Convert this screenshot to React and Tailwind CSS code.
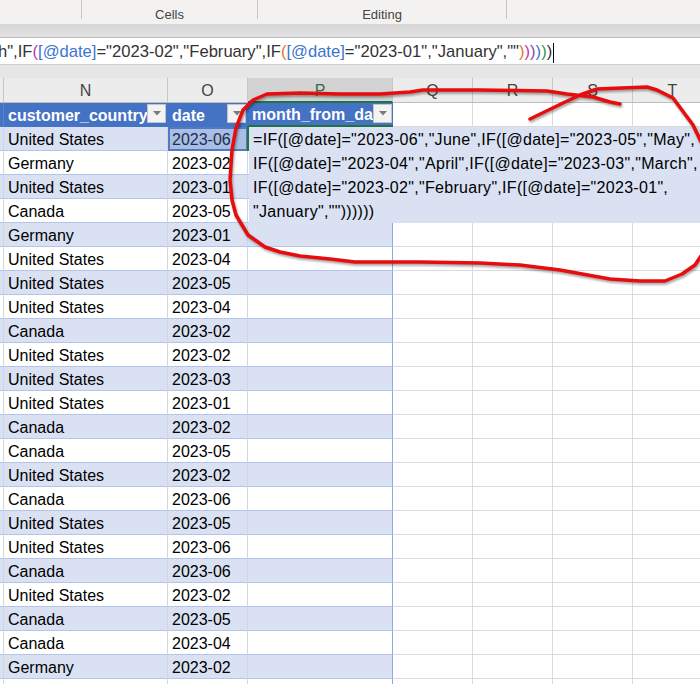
import React from 'react'

const rows = [
  ['United States', '2023-06'],
  ['Germany', '2023-02'],
  ['United States', '2023-01'],
  ['Canada', '2023-05'],
  ['Germany', '2023-01'],
  ['United States', '2023-04'],
  ['United States', '2023-05'],
  ['United States', '2023-04'],
  ['Canada', '2023-02'],
  ['United States', '2023-02'],
  ['United States', '2023-03'],
  ['United States', '2023-01'],
  ['Canada', '2023-02'],
  ['Canada', '2023-05'],
  ['United States', '2023-02'],
  ['Canada', '2023-06'],
  ['United States', '2023-05'],
  ['United States', '2023-06'],
  ['Canada', '2023-06'],
  ['United States', '2023-02'],
  ['Canada', '2023-05'],
  ['Canada', '2023-04'],
  ['Germany', '2023-02'],
  ['', ''],
]

const font = { fontFamily: '"Liberation Sans", Arial, sans-serif' }

function FilterButton() {
  return (
    <div className="absolute right-[1px] top-[1px] flex h-[19px] w-[19px] items-center justify-center border border-[#c4c4c4] bg-[#f3f3f3]">
      <svg width="8" height="5" viewBox="0 0 8 5">
        <path d="M0 0 L8 0 L4 4.5 Z" fill="#7b7b7b" />
      </svg>
    </div>
  )
}

function EmptyCells() {
  return (
    <>
      <div className="h-full w-[80px] shrink-0 border-r border-b border-[#dadada] bg-white" />
      <div className="h-full w-[80px] shrink-0 border-r border-b border-[#dadada] bg-white" />
      <div className="h-full w-[80px] shrink-0 border-r border-b border-[#dadada] bg-white" />
      <div className="h-full w-[80px] shrink-0 border-r border-b border-[#dadada] bg-white" />
    </>
  )
}

function DataRow({ country, date, band, selected }) {
  const bg = band ? 'bg-[#d9e1f2]' : 'bg-white'
  return (
    <div className="flex h-[24px] shrink-0">
      <div className={`h-full w-[4px] shrink-0 border-r border-b border-r-[#cfd6e4] border-b-[#b4c6e7] ${bg}`} />
      <div className={`h-full w-[164px] shrink-0 overflow-hidden whitespace-nowrap border-r border-b border-r-[#cfd6e4] border-b-[#b4c6e7] pl-[4px] leading-[25px] ${bg}`}>
        {country}
      </div>
      {selected ? (
        <div className="h-full w-[80px] shrink-0 overflow-hidden whitespace-nowrap bg-[#a9bee4] pl-[4px] leading-[25px] text-[#1f2d4d] shadow-[inset_0_0_0_2px_#5478c2]">
          {date}
        </div>
      ) : (
        <div className={`h-full w-[80px] shrink-0 overflow-hidden whitespace-nowrap border-r border-b border-r-[#cfd6e4] border-b-[#b4c6e7] pl-[4px] leading-[25px] ${bg}`}>
          {date}
        </div>
      )}
      <div className={`h-full w-[145px] shrink-0 border-r border-b border-r-[#8eaadb] border-b-[#b4c6e7] ${bg}`} />
      <EmptyCells />
    </div>
  )
}

function ColLetter({ w, children, active }) {
  return (
    <div
      className={`flex h-full shrink-0 items-center justify-center border-r border-[#c8c8c8] pt-[2px] ${w} ${
        active ? 'border-b-2 border-b-[#217346] bg-[#d3d3d3] text-[#2f6b48]' : 'border-b border-b-[#bdbdbd] text-[#444]'
      }`}
    >
      {children}
    </div>
  )
}

const Blue = ({ children }) => <span className="text-[#3b73d1]">{children}</span>

export default function App() {
  return (
    <div className="relative h-[684px] w-[700px] overflow-hidden bg-white text-[16px] text-black" style={font}>
      {/* ribbon bottom */}
      <div className="flex h-[24px] bg-[#f3f2f1] text-[13px] text-[#444]">
        <div className="h-[19px] w-[82px] shrink-0 border-r border-[#c8c6c4]" />
        <div className="h-[19px] w-[176px] shrink-0 border-r border-[#c8c6c4] text-center leading-[29px]">Cells</div>
        <div className="h-[19px] w-[249px] shrink-0 border-r border-[#c8c6c4] text-center leading-[29px]">Editing</div>
      </div>
      <div className="h-[14px] border-b border-[#bdbdbd] bg-gradient-to-b from-[#d5d5d5] to-[#e3e3e3]" />

      {/* formula bar */}
      <div className="flex h-[27px] items-center overflow-hidden whitespace-pre border-b border-[#d0d0d0] bg-white pt-[3px] text-[16.6px] text-[#333]">
        <span className="ml-[-2px]">
          h",IF<span className="text-[#c0379e]">(</span>
          <Blue>[@date]</Blue>="2023-02","February",IF<span className="text-[#e8751a]">(</span>
          <Blue>[@date]</Blue>="2023-01","January",""
          <span className="text-[#e8751a]">)</span>
          <span className="text-[#c0379e]">)</span>
          <span className="text-[#8e44ad]">)</span>
          <span className="text-[#3b73d1]">)</span>
          <span className="text-[#2e9b4e]">)</span>
          <span>)</span>
        </span>
        <span className="ml-[1px] h-[20px] w-[1px] bg-black" />
      </div>
      <div className="h-[13px] bg-[#e6e6e6]" />

      {/* column letters */}
      <div className="flex h-[25px] bg-[#ececec] text-[16px]">
        <ColLetter w="w-[4px]" />
        <ColLetter w="w-[164px]">N</ColLetter>
        <ColLetter w="w-[80px]">O</ColLetter>
        <ColLetter w="w-[145px]" active>P</ColLetter>
        <ColLetter w="w-[80px]">Q</ColLetter>
        <ColLetter w="w-[80px]">R</ColLetter>
        <ColLetter w="w-[80px]">S</ColLetter>
        <ColLetter w="w-[80px]">T</ColLetter>
      </div>

      {/* table header */}
      <div className="flex h-[24px] font-bold text-white">
        <div className="h-full w-[4px] shrink-0 border-r border-[#5b82c9] bg-[#4472c4]" />
        <div className="relative h-full w-[164px] shrink-0 overflow-hidden whitespace-nowrap border-r border-[#4472c4] bg-[#4472c4] pl-[4px] leading-[25px]">
          customer_country
          <FilterButton />
        </div>
        <div className="relative h-full w-[80px] shrink-0 overflow-hidden whitespace-nowrap border-r border-[#4472c4] bg-[#4472c4] pl-[4px] leading-[25px]">
          date
          <FilterButton />
        </div>
        <div className="relative h-full w-[145px] shrink-0 overflow-hidden whitespace-nowrap border-b-2 border-b-[#217346] bg-[#4472c4] pl-[4px] leading-[24px]">
          month_from_date
          <FilterButton />
        </div>
        <EmptyCells />
      </div>

      {rows.map((r, i) => (
        <DataRow key={i} country={r[0]} date={r[1]} band={i % 2 === 0} selected={i === 0} />
      ))}

      {/* in-cell editor */}
      <div className="absolute left-[249px] top-[127px] h-[96px] w-[460px] whitespace-pre bg-[#d9e1f2] pl-[4px] pt-[1px] text-[16px] leading-[24px] tracking-[0.3px]">
        <div>=IF([@date]="2023-06","June",IF([@date]="2023-05","May",</div>
        <div>IF([@date]="2023-04","April",IF([@date]="2023-03","March",</div>
        <div>IF([@date]="2023-02","February",IF([@date]="2023-01",</div>
        <div>"January",""))))))</div>
      </div>
      <div className="absolute left-[247px] top-[126px] h-[25px] w-[2px] bg-[#217346]" />

      {/* red hand-drawn loop */}
      <svg className="pointer-events-none absolute left-0 top-0 drop-shadow-[1px_2px_1px_rgba(0,0,0,0.35)]" width="700" height="684" viewBox="0 0 700 684">
        <path
          d="M620 104 L610 102 L593 97 L567 94 L547 91 L480 90 L423 90 L410 92 L380 94 L340 94 L300 93 L267 94 L253 100 L243 110 L236 128 L232 150 L230 180 L232 200 L236 215 L248 235 L265 247 L280 252 L300 256 L330 259 L355 262 L420 262 L480 263 L520 265 L560 270 L610 279 L640 281 L665 281 L682 274 L695 265 L705 250 L712 200 L705 150 L693 125 L673 98 L657 90 L647 87 L597 89 L580 95 L563 103 L530 119"
          fill="none"
          stroke="#e80c0c"
          strokeWidth="3.5"
          strokeLinejoin="round"
          strokeLinecap="round"
        />
      </svg>
    </div>
  )
}
